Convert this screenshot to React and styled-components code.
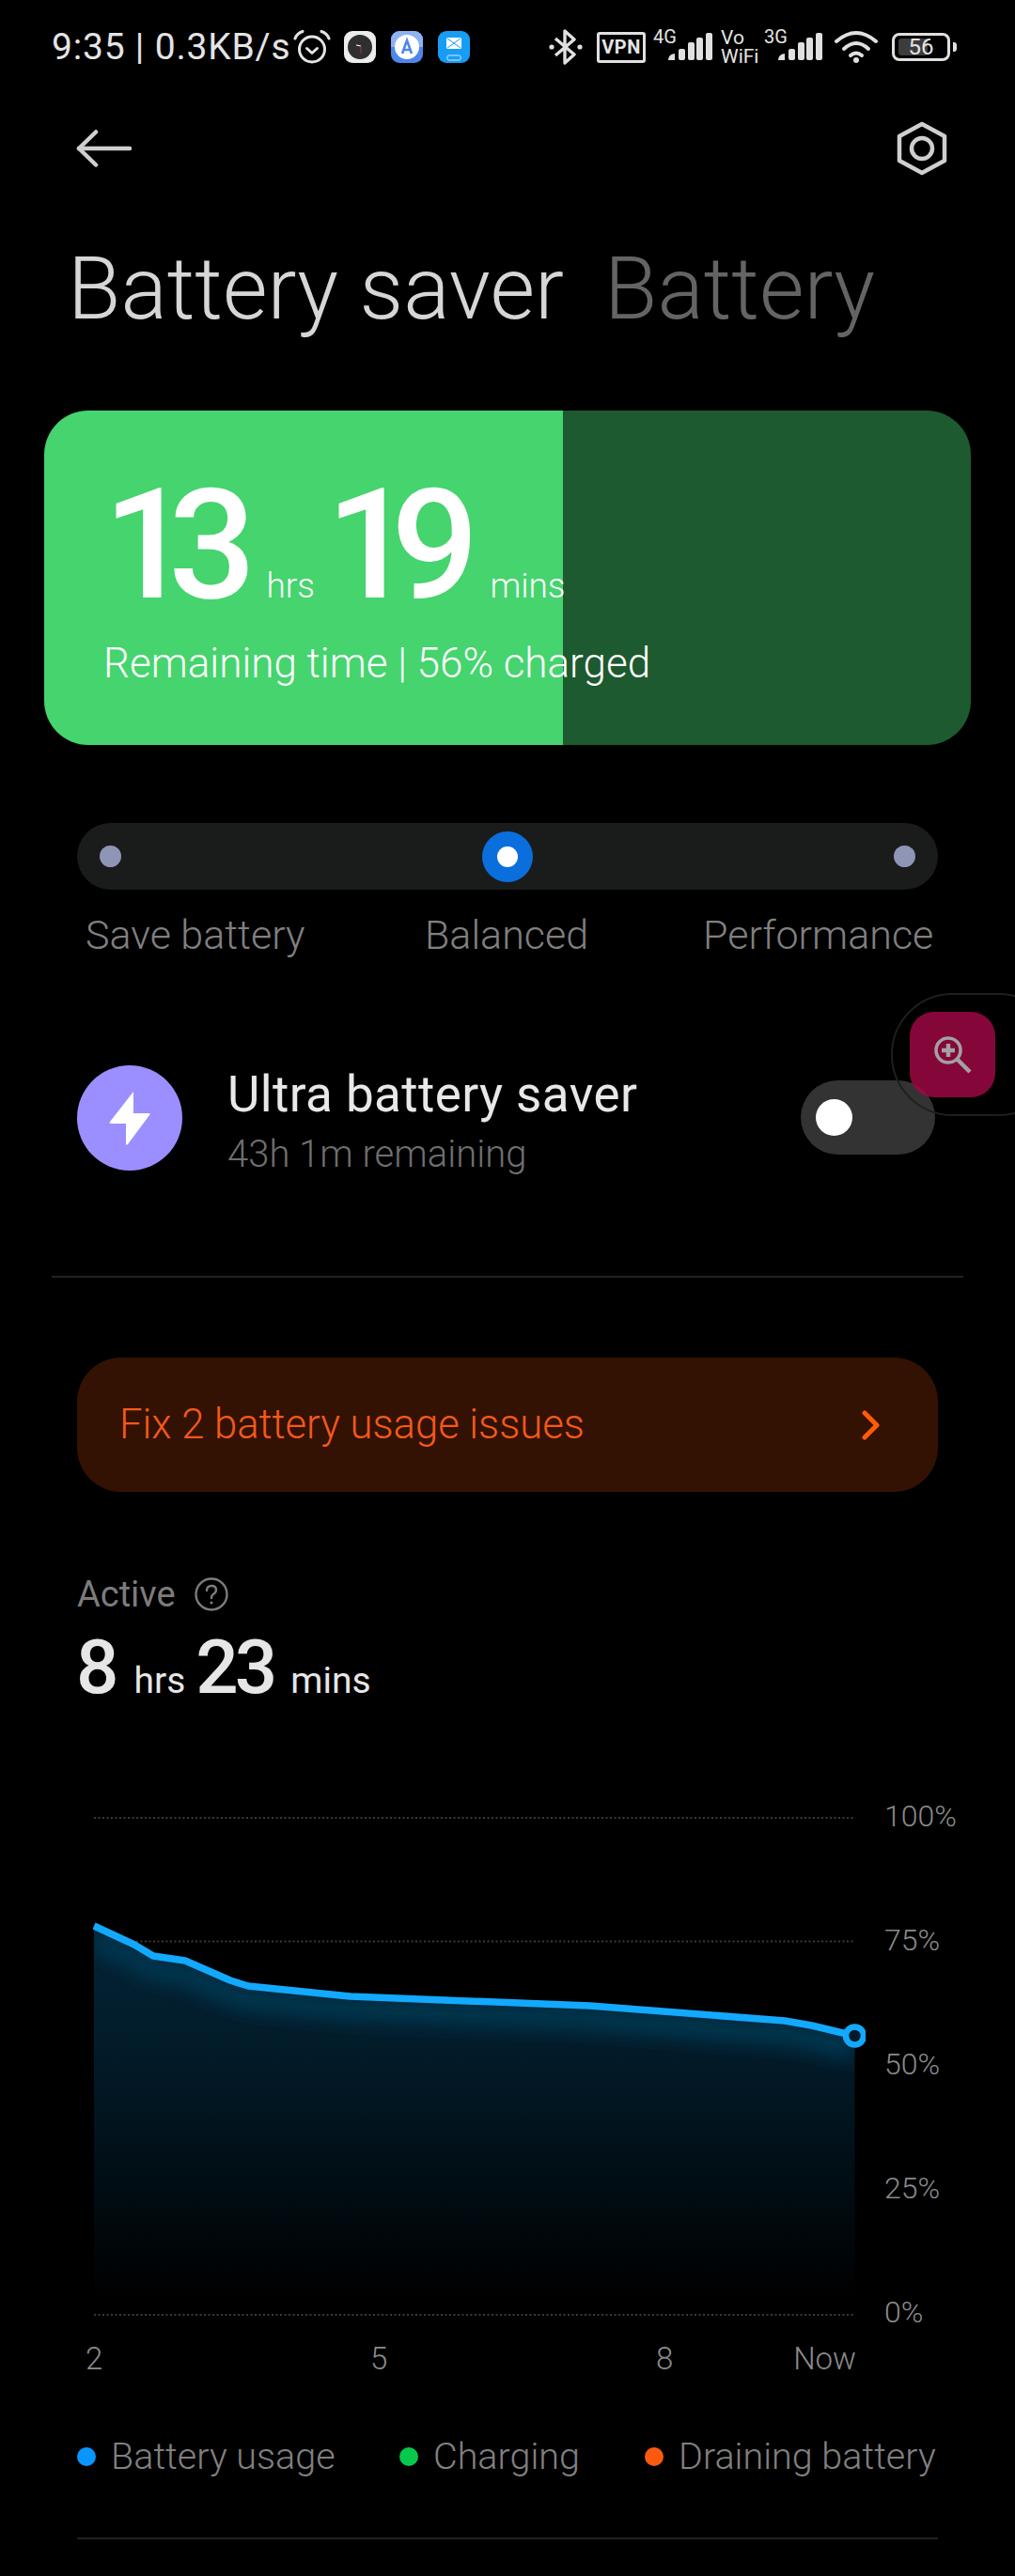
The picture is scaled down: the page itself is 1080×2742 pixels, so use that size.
import React from 'react';
import styled, { createGlobalStyle } from 'styled-components';

const GlobalStyle = createGlobalStyle`
   html, body { margin: 0; padding: 0; background: #000; }
   * { box-sizing: border-box; }
`;

const FONT = `Roboto, "Noto Sans", sans-serif`;

const Page = styled.div`
      position: relative;
      width: 1080px;
      height: 2742px;
      overflow: hidden;
      background: #000;
      color: #e6e6e6;
      font-family: ${FONT};
   `,
   StatusBar = styled.div`
      display: flex;
      align-items: center;
      height: 100px;
      padding-left: 55px;
      color: #e4e4e4;
   `,
   StatusClock = styled.span`
      width: 257px;
      font-size: 39px;
      line-height: 38px;
      letter-spacing: 0.8px;
      white-space: nowrap;
   `,
   StatusSlot = styled.div`
      display: flex;
      margin-left: ${props => props.left}px;
   `,
   AppIcon = styled.div`
      display: flex;
      align-items: center;
      justify-content: center;
      width: 34px;
      height: 34px;
      margin-left: ${props => props.left}px;
      border-radius: 9px;
      background: ${props => props.color};
      overflow: hidden;
   `,
   VpnBadge = styled.span`
      display: flex;
      align-items: center;
      justify-content: center;
      width: 52px;
      height: 33px;
      border: 3px solid #e0e0e0;
      border-radius: 3px;
      font-size: 20px;
      font-weight: 700;
      letter-spacing: 0.5px;
   `,
   SignalWrap = styled.div`
      position: relative;
      width: ${props => props.width}px;
      height: 38px;
   `,
   SignalTag = styled.span`
      position: absolute;
      left: 0;
      top: 0;
      font-size: 20px;
      line-height: 16px;
   `,
   SignalSvg = styled.svg`
      position: absolute;
      right: 0;
      top: 0;
   `,
   VoWifi = styled.span`
      display: block;
      width: 41px;
      font-size: 21px;
      line-height: 20px;
   `,
   BatteryBody = styled.div`
      position: relative;
      display: flex;
      align-items: center;
      justify-content: center;
      width: 62px;
      height: 30px;
      border: 3px solid #e0e0e0;
      border-radius: 8px;
      font-size: 24px;
      line-height: 24px;
      &::before {
         content: '';
         position: absolute;
         left: 4px;
         top: 3px;
         bottom: 3px;
         width: 56%;
         background: #3c3c3c;
         border-radius: 3px;
      }
      &::after {
         content: '';
         position: absolute;
         right: -10px;
         top: 7px;
         width: 4px;
         height: 10px;
         background: #e0e0e0;
         border-radius: 0 3px 3px 0;
      }
      span { position: relative; }
   `,
   ActionBar = styled.div`
      display: flex;
      align-items: center;
      justify-content: space-between;
      height: 58px;
      margin-top: 29px;
      padding: 0 72px 0 81px;
   `,
   Title = styled.div`
      display: flex;
      gap: 43px;
      margin-top: 66px;
      padding-left: 72px;
      font-size: 92px;
      line-height: 110px;
      font-weight: 300;
      white-space: nowrap;
   `,
   TitleTab = styled.span`
      color: ${props => props.active ? '#d6d6d6' : '#646464'};
   `,
   TimeCard = styled.div`
      height: 356px;
      margin: 74px 47px 0;
      padding: 68px 0 0 63px;
      border-radius: 47px;
      color: #fff;
      white-space: nowrap;
      background: linear-gradient(90deg, #45d46e ${props => props.level}%, #1d5a2f ${props => props.level}%);
   `,
   TimeLine = styled.div`
      display: flex;
      align-items: baseline;
      height: 150px;
   `,
   BigNumber = styled.span`
      font-size: 164px;
      line-height: 150px;
      font-weight: 500;
      letter-spacing: -24px;
   `,
   BigUnit = styled.span`
      font-size: 37px;
      font-weight: 300;
      margin: 0 ${props => props.after || 0}px 0 ${props => props.before}px;
   `,
   TimeNote = styled.div`
      margin-top: 23px;
      font-size: 44px;
      line-height: 56px;
      font-weight: 300;
   `,
   ModeTrack = styled.div`
      display: flex;
      align-items: center;
      justify-content: space-between;
      height: 71px;
      margin: 83px 82px 0;
      padding: 0 24px;
      border-radius: 36px;
      background: #1a1c1c;
   `,
   ModeDot = styled.span`
      width: 23px;
      height: 23px;
      border-radius: 50%;
      background: #8f95b5;
   `,
   ModeKnob = styled.span`
      display: flex;
      align-items: center;
      justify-content: center;
      width: 54px;
      height: 54px;
      border-radius: 50%;
      background: #0a6fdc;
      &::after {
         content: '';
         width: 22px;
         height: 22px;
         border-radius: 50%;
         background: #fff;
      }
   `,
   ModeLabels = styled.div`
      display: grid;
      grid-template-columns: 361px 296px auto;
      margin-top: 23px;
      padding-left: 91px;
      font-size: 43px;
      line-height: 50px;
      font-weight: 300;
      color: #808080;
   `,
   UltraRow = styled.div`
      display: flex;
      align-items: flex-start;
      margin-top: 114px;
      padding: 0 85px 0 82px;
   `,
   UltraIcon = styled.div`
      display: flex;
      align-items: center;
      justify-content: center;
      flex: none;
      width: 112px;
      height: 112px;
      border-radius: 50%;
      background: #9b8fff;
   `,
   UltraText = styled.div`
      flex: 1;
      margin-left: 48px;
   `,
   UltraTitle = styled.div`
      font-size: 53px;
      line-height: 62px;
      letter-spacing: 0.4px;
      color: #e8e8e8;
   `,
   UltraSub = styled.div`
      margin-top: 8px;
      font-size: 40px;
      line-height: 50px;
      font-weight: 300;
      color: #6f6f6f;
   `,
   Toggle = styled.div`
      display: flex;
      align-items: center;
      width: 143px;
      height: 79px;
      margin-top: 16px;
      padding-left: 16px;
      border-radius: 40px;
      background: #333;
      &::after {
         content: '';
         width: 39px;
         height: 39px;
         border-radius: 50%;
         background: #fff;
      }
   `,
   Divider = styled.div`
      height: 2px;
      margin: ${props => props.top}px ${props => props.side}px 0;
      background: #222;
   `,
   FloatPill = styled.div`
      position: absolute;
      left: 948px;
      top: 1057px;
      width: 180px;
      height: 131px;
      border: 2px solid #1f1f1f;
      border-radius: 66px;
   `,
   FloatButton = styled.div`
      position: absolute;
      left: 968px;
      top: 1077px;
      display: flex;
      align-items: center;
      justify-content: center;
      width: 91px;
      height: 91px;
      border-radius: 26px;
      background: rgba(158, 8, 68, 0.84);
   `,
   IssueCard = styled.div`
      display: flex;
      align-items: center;
      justify-content: space-between;
      height: 143px;
      margin: 85px 82px 0;
      padding: 0 61px 0 45px;
      border-radius: 47px;
      background: #331204;
      color: #f4591a;
      font-size: 43.6px;
      font-weight: 300;
   `,
   ActiveLabel = styled.div`
      display: flex;
      align-items: center;
      gap: 20px;
      margin-top: 86px;
      padding-left: 82px;
      font-size: 38px;
      line-height: 46px;
      color: #7c7c7c;
   `,
   ActiveTime = styled.div`
      display: flex;
      align-items: baseline;
      height: 80px;
      margin-top: 15px;
      padding-left: 81px;
   `,
   ActiveNumber = styled.span`
      font-size: 80px;
      line-height: 80px;
      font-weight: 500;
      letter-spacing: -4px;
   `,
   ActiveUnit = styled.span`
      font-size: 39px;
      margin: 0 ${props => props.after || 0}px 0 ${props => props.before}px;
   `,
   ChartArea = styled.div`
      display: flex;
      height: 562px;
      margin-top: 103px;
      padding-left: 99px;
   `,
   ChartGraph = styled.svg`
      display: block;
      flex: none;
   `,
   YAxis = styled.div`
      display: flex;
      flex-direction: column;
      justify-content: space-between;
      height: 562px;
      margin: -2px 0 0 20px;
      font-size: 32px;
      line-height: 34px;
      font-weight: 300;
      color: #8a8a8a;
   `,
   XAxis = styled.div`
      display: grid;
      grid-template-columns: 303px 304px 1fr auto;
      width: 820px;
      margin: 11px 0 0 91px;
      font-size: 33px;
      line-height: 40px;
      font-weight: 300;
      color: #8a8a8a;
   `,
   Legend = styled.div`
      display: grid;
      grid-template-columns: 343px 261px auto;
      margin-top: 59px;
      padding-left: 82px;
      font-size: 39.5px;
      line-height: 50px;
      font-weight: 300;
      color: #808080;
      white-space: nowrap;
   `,
   LegendItem = styled.div`
      display: flex;
      align-items: center;
      gap: 16px;
      &::before {
         content: '';
         width: 20px;
         height: 20px;
         border-radius: 50%;
         background: ${props => props.color};
      }
   `;

const AlarmIcon = () => (
   <svg width="40" height="36" viewBox="0 0 40 36" fill="none" stroke="#e4e4e4" strokeWidth="3" strokeLinecap="round" strokeLinejoin="round">
      <circle cx="20" cy="20.5" r="13.5" />
      <path d="M14.5 19.5 L20 24.5 L25.5 19.5" />
      <path d="M2 9 Q4 3.5 10 1.5" />
      <path d="M38 9 Q36 3.5 30 1.5" />
   </svg>
);

const ClockApp = () => (
   <svg width="26" height="26" viewBox="0 0 26 26">
      <circle cx="13" cy="13" r="13" fill="#2f2f2f" />
      <path d="M9 11 L14 12" stroke="#fff" strokeWidth="1.2" />
      <path d="M14 12 V20" stroke="#a33" strokeWidth="1" />
   </svg>
);

const TranslateApp = () => (
   <svg width="34" height="34" viewBox="0 0 34 34">
      <rect width="34" height="17" fill="#8cb4f3" />
      <circle cx="17" cy="17" r="13" fill="#fff" />
      <path d="M12 24 L17 10 L22 24 M14 20 H20" fill="none" stroke="#4f86ea" strokeWidth="2.6" />
   </svg>
);

const MailApp = () => (
   <svg width="34" height="34" viewBox="0 0 34 34">
      <rect x="9" y="7" width="16" height="12" rx="1.5" fill="#fff" />
      <path d="M10 8 L24 18 M24 8 L10 18" stroke="#189df5" strokeWidth="1" />
      <rect x="10" y="26" width="14" height="5" rx="1.5" fill="none" stroke="#d6eeff" strokeWidth="1" />
   </svg>
);

const Bluetooth = () => (
   <svg width="36" height="38" viewBox="0 0 36 38" fill="none" stroke="#e0e0e0" strokeWidth="3.4" strokeLinejoin="round">
      <path d="M7 10 L27 27 L17 36 V2 L27 11 L7 28" />
      <circle cx="3" cy="19" r="2.6" fill="#e0e0e0" stroke="none" />
      <circle cx="33" cy="19" r="2.6" fill="#e0e0e0" stroke="none" />
   </svg>
);

const SignalBars = () => (
   <SignalSvg width="47" height="38" viewBox="0 0 47 38" fill="#e0e0e0">
      <path d="M0 33 Q0 27 7 26 V33 Z" />
      <rect x="11" y="21" width="7" height="12" rx="2" />
      <rect x="21" y="14" width="7" height="19" rx="2" />
      <rect x="30" y="9" width="7" height="24" rx="2" />
      <rect x="40" y="4" width="7" height="29" rx="2" />
   </SignalSvg>
);

const Wifi = () => (
   <svg width="46" height="36" viewBox="0 0 46 36" fill="none" stroke="#e0e0e0" strokeWidth="4" strokeLinecap="round">
      <path d="M2 12 Q23 -6 44 12" />
      <path d="M10 20 Q23 8 36 20" />
      <path d="M17 27 Q23 22 29 27" />
      <circle cx="23" cy="32" r="3" fill="#e0e0e0" stroke="none" />
   </svg>
);

const BackArrow = () => (
   <svg width="60" height="40" viewBox="0 0 60 40" fill="none" stroke="#cfcfcf" strokeWidth="4.5" strokeLinecap="round" strokeLinejoin="round">
      <path d="M3 20 H57" />
      <path d="M21 2.5 L3 20 L21 37.5" />
   </svg>
);

const HexSettings = () => (
   <svg width="54" height="58" viewBox="0 0 54 58" fill="none" stroke="#cfcfcf" strokeWidth="4.5" strokeLinejoin="round">
      <path d="M27 3 L51 16 V42 L27 55 L3 42 V16 Z" />
      <circle cx="27" cy="29" r="11" />
   </svg>
);

const Bolt = () => (
   <svg width="44" height="58" viewBox="0 0 44 58" fill="#fff">
      <path d="M26 1 L1 33 Q0 35 2 35 H18 V56 Q18 59 20 57 L43 26 Q45 24 42 24 H26 Z" />
   </svg>
);

const ZoomGlyph = () => (
   <svg width="42" height="42" viewBox="0 0 42 42" fill="none" stroke="#a3a0a4">
      <circle cx="16" cy="16" r="13" strokeWidth="3.6" />
      <path d="M16 9 V23 M9 16 H23" strokeWidth="4.4" />
      <path d="M25.5 25.5 L39 39" strokeWidth="4.4" />
   </svg>
);

const Chevron = () => (
   <svg width="20" height="32" viewBox="0 0 20 32" fill="none" stroke="#ff5a0a" strokeWidth="5" strokeLinecap="round" strokeLinejoin="round">
      <path d="M3 3 L16 16 L3 29" />
   </svg>
);

const HelpIcon = () => (
   <svg width="36" height="36" viewBox="0 0 36 36" fill="none" stroke="#7c7c7c" strokeWidth="2.4">
      <circle cx="18" cy="18" r="16.5" />
      <path d="M13 14 Q13 9 18 9 Q23 9 23 13.5 Q23 16 20 18 Q18 19 18 22" strokeLinecap="round" />
      <circle cx="18" cy="27" r="1.6" fill="#7c7c7c" stroke="none" />
   </svg>
);

const GRID_LINES = [17, 148.5, 280, 412, 546];
const LINE = 'M1 132 L44 152 L64 164 L98 169 L146 190 L165 196 L273.5 207 L528.6 217 L736 233 L764.6 238 L810.5 249';

const BatteryChart = () => (
   <ChartGraph width="822" height="562" viewBox="0 0 822 562">
      <defs>
         <linearGradient id="areaFill" x1="0" y1="130" x2="0" y2="530" gradientUnits="userSpaceOnUse">
            <stop offset="0" stopColor="#032436" />
            <stop offset="0.35" stopColor="#021b29" />
            <stop offset="1" stopColor="#000" />
         </linearGradient>
         <filter id="glow" x="-5%" y="-30%" width="110%" height="160%">
            <feGaussianBlur stdDeviation="9" />
         </filter>
         <clipPath id="areaClip">
            <path d={`${LINE} V530 H1 Z`} />
         </clipPath>
      </defs>
      {GRID_LINES.map(y => (
         <line key={y} x1="1" x2="811" y1={y} y2={y} stroke="#3a3a3a" strokeWidth="2" strokeDasharray="2 2.5" />
      ))}
      <path d={`${LINE} V530 H1 Z`} fill="url(#areaFill)" />
      <g clipPath="url(#areaClip)">
         <path d={LINE} transform="translate(0 14)" fill="none" stroke="#05344d" strokeWidth="26" filter="url(#glow)" />
      </g>
      <path d={LINE} fill="none" stroke="#12a9ff" strokeWidth="7.5" strokeLinejoin="round" />
      <circle cx="810.5" cy="249" r="9.5" fill="#021a27" stroke="#12a9ff" strokeWidth="6.5" />
   </ChartGraph>
);

const App = () => (
   <Page>
      <GlobalStyle />
      <StatusBar>
         <StatusClock>9:35 | 0.3KB/s</StatusClock>
         <AlarmIcon />
         <AppIcon color="#ececec" left={14}><ClockApp /></AppIcon>
         <AppIcon color="#4f86ea" left={16}><TranslateApp /></AppIcon>
         <AppIcon color="#189df5" left={16}><MailApp /></AppIcon>
         <StatusSlot left={84}><Bluetooth /></StatusSlot>
         <StatusSlot left={15}><VpnBadge>VPN</VpnBadge></StatusSlot>
         <StatusSlot left={8}>
            <SignalWrap width={63}>
               <SignalTag>4G</SignalTag>
               <SignalBars />
            </SignalWrap>
         </StatusSlot>
         <StatusSlot left={9}><VoWifi>Vo<br />WiFi</VoWifi></StatusSlot>
         <StatusSlot left={5}>
            <SignalWrap width={62}>
               <SignalTag>3G</SignalTag>
               <SignalBars />
            </SignalWrap>
         </StatusSlot>
         <StatusSlot left={13}><Wifi /></StatusSlot>
         <StatusSlot left={15}><BatteryBody><span>56</span></BatteryBody></StatusSlot>
      </StatusBar>
      <ActionBar>
         <BackArrow />
         <HexSettings />
      </ActionBar>
      <Title>
         <TitleTab active>Battery saver</TitleTab>
         <TitleTab>Battery</TitleTab>
      </Title>
      <TimeCard level={56}>
         <TimeLine>
            <BigNumber>13</BigNumber>
            <BigUnit before={35} after={12}>hrs</BigUnit>
            <BigNumber>19</BigNumber>
            <BigUnit before={36}>mins</BigUnit>
         </TimeLine>
         <TimeNote>Remaining time | 56% charged</TimeNote>
      </TimeCard>
      <ModeTrack>
         <ModeDot />
         <ModeKnob />
         <ModeDot />
      </ModeTrack>
      <ModeLabels>
         <span>Save battery</span>
         <span>Balanced</span>
         <span>Performance</span>
      </ModeLabels>
      <UltraRow>
         <UltraIcon><Bolt /></UltraIcon>
         <UltraText>
            <UltraTitle>Ultra battery saver</UltraTitle>
            <UltraSub>43h 1m remaining</UltraSub>
         </UltraText>
         <Toggle />
      </UltraRow>
      <Divider top={104} side={55} />
      <IssueCard>
         Fix 2 battery usage issues
         <Chevron />
      </IssueCard>
      <ActiveLabel>
         Active
         <HelpIcon />
      </ActiveLabel>
      <ActiveTime>
         <ActiveNumber>8</ActiveNumber>
         <ActiveUnit before={20} after={11}>hrs</ActiveUnit>
         <ActiveNumber>23</ActiveNumber>
         <ActiveUnit before={18}>mins</ActiveUnit>
      </ActiveTime>
      <ChartArea>
         <BatteryChart />
         <YAxis>
            <span>100%</span>
            <span>75%</span>
            <span>50%</span>
            <span>25%</span>
            <span>0%</span>
         </YAxis>
      </ChartArea>
      <XAxis>
         <span>2</span>
         <span>5</span>
         <span>8</span>
         <span>Now</span>
      </XAxis>
      <Legend>
         <LegendItem color="#0a96ff">Battery usage</LegendItem>
         <LegendItem color="#06c84b">Charging</LegendItem>
         <LegendItem color="#fb5a0e">Draining battery</LegendItem>
      </Legend>
      <Divider top={61} side={82} />
      <FloatPill />
      <FloatButton><ZoomGlyph /></FloatButton>
   </Page>
);

export default App;
